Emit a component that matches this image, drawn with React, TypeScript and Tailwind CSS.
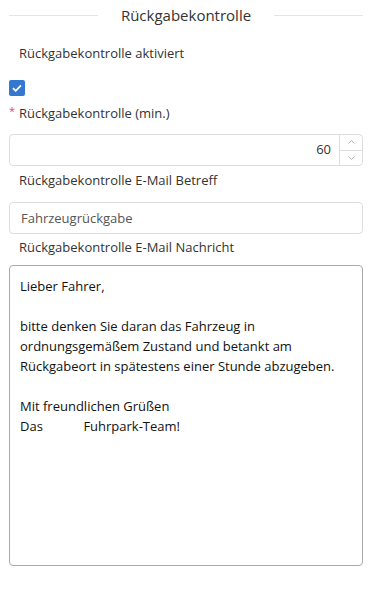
import { useState } from "react";

const message =
  "Lieber Fahrer,\n\nbitte denken Sie daran das Fahrzeug in ordnungsgemäßem Zustand und betankt am Rückgabeort in spätestens einer Stunde abzugeben.\n\nMit freundlichen Grüßen\nDas            Fuhrpark-Team!";

const App = () => {
  const [active, setActive] = useState(true);
  const [minutes, setMinutes] = useState(60);

  return (
    <div
      className="w-[373px] h-[592px] bg-white text-[#333] pl-[9px] pr-[10px] pt-[5px]"
      style={{ fontFamily: "'Open Sans', sans-serif" }}
    >
      <div className="flex items-center h-[20px]">
        <div className="flex-1 h-px bg-[#e5e5e5]" />
        <h2 className="px-[23px] text-[15px] leading-[20px] text-[#333]">Rückgabekontrolle</h2>
        <div className="flex-1 h-px bg-[#e5e5e5]" />
      </div>

      <label className="block pl-[10px] mt-[19px] text-[13px] leading-[18px]">
        Rückgabekontrolle aktiviert
      </label>
      <button
        type="button"
        onClick={() => setActive(!active)}
        className={`mt-[18px] flex items-center justify-center w-[16px] h-[16px] rounded-[2px] ${
          active ? "bg-[#3477d1]" : "border border-[#ccc] bg-white"
        }`}
      >
        {active && (
          <svg width="10" height="8" viewBox="0 0 10 8" fill="none">
            <path d="M1 4.2 3.7 6.8 9 1.4" stroke="white" strokeWidth="1.8" />
          </svg>
        )}
      </button>

      <label className="flex items-start mt-[8px] text-[13px] leading-[18px]">
        <span className="w-[10px] text-[#e8417a] text-[11px] leading-[14px]">*</span>
        Rückgabekontrolle (min.)
      </label>
      <div className="mt-[12px] flex h-[32px] border border-[#ddd] rounded-[4px] bg-white">
        <input
          type="text"
          value={minutes}
          onChange={(e) => setMinutes(Number(e.target.value) || 0)}
          className="flex-1 min-w-0 text-right pr-[8px] text-[13px] outline-none bg-transparent text-[#333]"
        />
        <div className="w-[23px] flex flex-col border-l border-[#ddd] text-[#aaa]">
          <button type="button" onClick={() => setMinutes(minutes + 1)} className="flex-1 flex items-center justify-center border-b border-[#ddd]">
            <svg width="7" height="4" viewBox="0 0 7 4" fill="none">
              <path d="M0.5 3.5 3.5 0.7 6.5 3.5" stroke="currentColor" strokeWidth="0.9" />
            </svg>
          </button>
          <button type="button" onClick={() => setMinutes(minutes - 1)} className="flex-1 flex items-center justify-center">
            <svg width="7" height="4" viewBox="0 0 7 4" fill="none">
              <path d="M0.5 0.5 3.5 3.3 6.5 0.5" stroke="currentColor" strokeWidth="0.9" />
            </svg>
          </button>
        </div>
      </div>

      <label className="block pl-[10px] mt-[5px] text-[13px] leading-[18px]">
        Rückgabekontrolle E-Mail Betreff
      </label>
      <input
        type="text"
        defaultValue="Fahrzeugrückgabe"
        className="mt-[13px] block w-full h-[32px] border border-[#ddd] rounded-[4px] px-[11px] text-[13px] text-[#555] outline-none"
      />

      <label className="block pl-[10px] mt-[4px] text-[13px] leading-[18px]">
        Rückgabekontrolle E-Mail Nachricht
      </label>
      <textarea
        defaultValue={message}
        className="mt-[9px] block w-full h-[301px] border border-[#aaa] rounded-[4px] px-[10px] py-[10px] text-[13px] leading-[20px] text-[#111] outline-none resize-none whitespace-pre-wrap"
      />
    </div>
  );
};

export default App;
